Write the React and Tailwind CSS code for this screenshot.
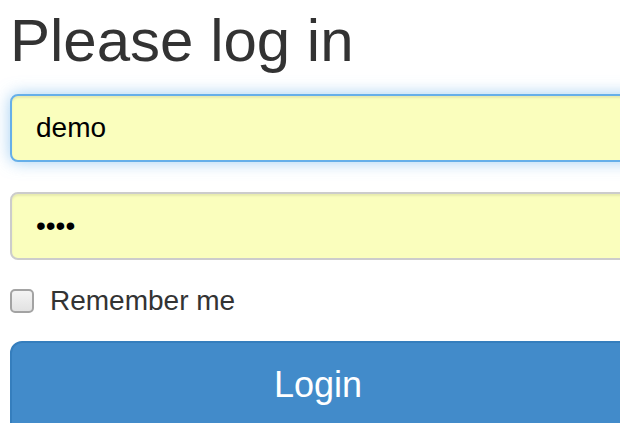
// Sign-in form, Bootstrap 3 look at 2x scale
export default function App() {
  return (
    <div className="w-[620px] h-[423px] overflow-hidden bg-white font-['Liberation_Sans',Arial,sans-serif] text-[#333]">
      <form className="w-[640px] ml-[10px] pt-[8px]" onSubmit={(e) => e.preventDefault()}>
        <h2 className="text-[60px] leading-[66px] font-normal mb-[20px]">Please log in</h2>

        <input
          type="text"
          readOnly
          value="demo"
          className="block w-full h-[68px] px-[24px] rounded-[8px] border-2 border-[#66afe9] bg-[#fafebd] text-[28px] text-black outline-none shadow-[inset_0_2px_2px_rgba(0,0,0,0.075),0_0_16px_rgba(102,175,233,0.6)]"
        />

        <input
          type="password"
          readOnly
          value="demo"
          className="block w-full h-[68px] mt-[30px] px-[24px] rounded-[8px] border-2 border-[#ccc] bg-[#fafebd] text-[28px] text-black outline-none shadow-[inset_0_2px_2px_rgba(0,0,0,0.075)]"
        />

        <label className="flex items-center mt-[21px] h-[40px] text-[28px] leading-[40px]">
          <span className="w-[24px] h-[24px] rounded-[5px] border-2 border-[#a3a3a3] bg-gradient-to-b from-[#f4f4f4] to-[#e2e2e2] shrink-0" />
          <span className="ml-[16px]">Remember me</span>
        </label>

        <button
          type="submit"
          className="block w-full mt-[20px] h-[96px] pt-[18px] pb-[30px] pr-[24px] rounded-[12px] border-2 border-[#357ebd] bg-[#428bca] text-white text-[36px] leading-[48px]"
        >
          Login
        </button>
      </form>
    </div>
  );
}
